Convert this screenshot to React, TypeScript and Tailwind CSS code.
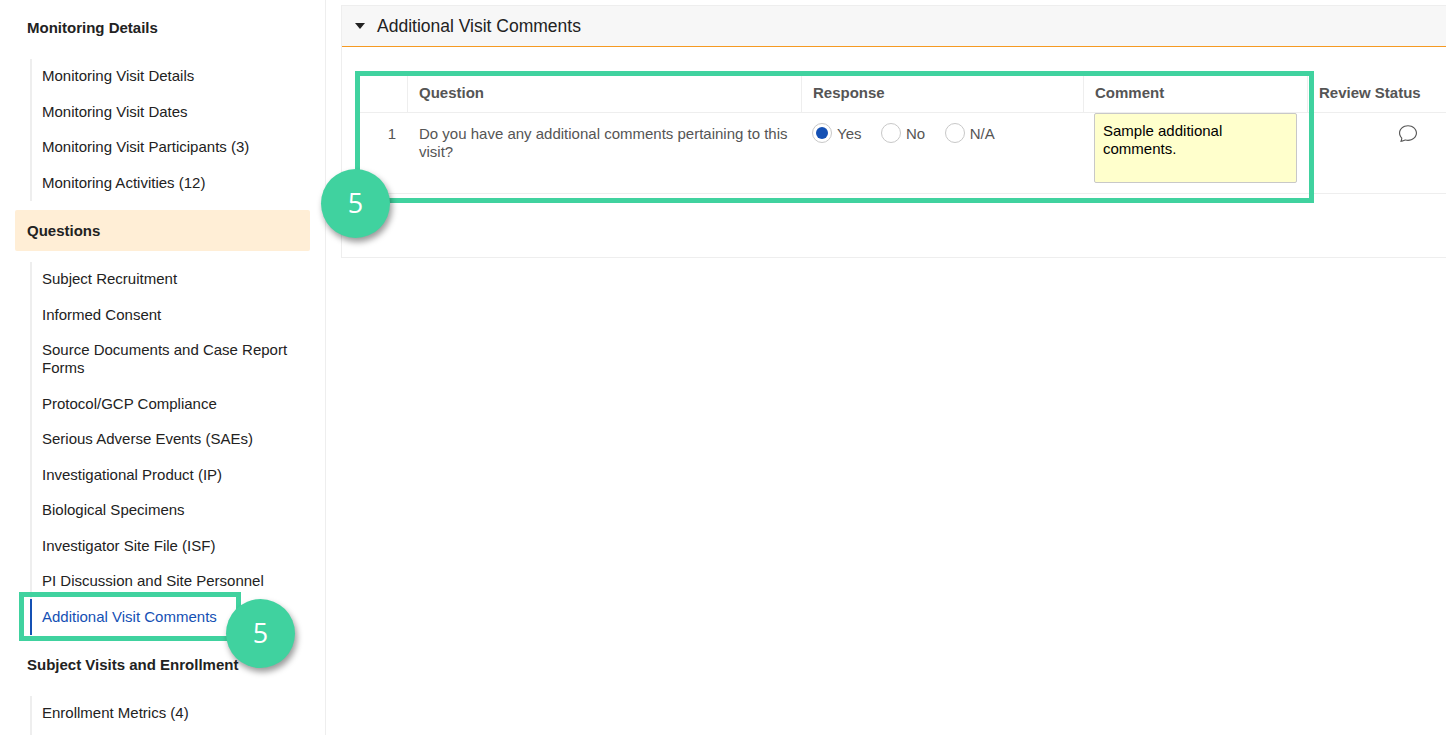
import { BsChat } from 'react-icons/bs'

const monitoringItems = [
  'Monitoring Visit Details',
  'Monitoring Visit Dates',
  'Monitoring Visit Participants (3)',
  'Monitoring Activities (12)',
]

const questionItems = [
  'Subject Recruitment',
  'Informed Consent',
  'Source Documents and Case Report Forms',
  'Protocol/GCP Compliance',
  'Serious Adverse Events (SAEs)',
  'Investigational Product (IP)',
  'Biological Specimens',
  'Investigator Site File (ISF)',
  'PI Discussion and Site Personnel',
]

function SectionHeading({ label, active }: { label: string; active?: boolean }) {
  return (
    <div
      className={`ml-[15px] flex h-[41px] w-[295px] items-center rounded-[2px] px-3 pt-[1px] text-[15px] font-bold text-[#222] ${
        active ? 'bg-[#ffeed6]' : ''
      }`}
    >
      {label}
    </div>
  )
}

function NavItem({ label, active }: { label: string; active?: boolean }) {
  return (
    <li
      className={`-ml-[2px] border-l-2 py-[8.75px] pl-[10px] pr-4 text-[15px] leading-[18px] ${
        active ? 'border-[#1450b4] text-[#1450b4]' : 'border-transparent text-[#222]'
      }`}
    >
      {label}
    </li>
  )
}

function NavList({ children, last }: { children: React.ReactNode; last?: boolean }) {
  return (
    <ul className={`mb-[9.5px] ml-[30px] mt-[10.5px] border-l-2 border-[#eeeeee] ${last ? 'pb-6' : ''}`}>
      {children}
    </ul>
  )
}

function Radio({ label, checked }: { label: string; checked?: boolean }) {
  return (
    <div className="flex items-center gap-[5px]">
      <span className="flex h-5 w-5 items-center justify-center rounded-full border border-[#c8c8c8] bg-white">
        {checked && <span className="h-3 w-3 rounded-full bg-[#1450b4]" />}
      </span>
      <span className="pt-[1px]">{label}</span>
    </div>
  )
}

function HeaderCell({ label, last }: { label?: string; last?: boolean }) {
  return (
    <div
      className={`flex items-center px-[11px] pb-[2px] text-[15px] font-bold text-[#555] ${
        last ? '' : 'border-r border-[#eeeeee]'
      }`}
    >
      {label}
    </div>
  )
}

function Badge({ className }: { className: string }) {
  return (
    <div
      className={`absolute flex h-[69px] w-[69px] items-center justify-center rounded-full bg-[#40d29f] text-[27px] text-white shadow-[2px_4px_6px_rgba(0,0,0,0.4)] [font-family:'Open_Sans',sans-serif] ${className}`}
    >
      5
    </div>
  )
}

export default function App() {
  return (
    <div className="relative flex h-[735px] w-[1446px] overflow-hidden bg-white [font-family:'Liberation_Sans',Arial,sans-serif]">
      <aside className="w-[326px] shrink-0 border-r border-[#eeeeee] pt-[7px]">
        <SectionHeading label="Monitoring Details" />
        <NavList>
          {monitoringItems.map((item) => (
            <NavItem key={item} label={item} />
          ))}
        </NavList>
        <SectionHeading label="Questions" active />
        <NavList>
          {questionItems.map((item) => (
            <NavItem key={item} label={item} />
          ))}
          <NavItem label="Additional Visit Comments" active />
        </NavList>
        <SectionHeading label="Subject Visits and Enrollment" />
        <NavList last>
          <NavItem label="Enrollment Metrics (4)" />
        </NavList>
      </aside>

      <main className="min-w-0 flex-1 pl-[15px] pt-[5px]">
        <section className="h-[253px] w-[1200px] border border-[#eeeeee]">
          <header className="flex h-[41px] items-center gap-[12px] border-b border-[#f59a23] bg-[#f7f7f7] pl-[13px] text-[17.5px] text-[#222]">
            <span className="h-0 w-0 border-x-[5.5px] border-t-[6px] border-x-transparent border-t-[#222]" />
            Additional Visit Comments
          </header>

          <div className="ml-[18px] mt-[29px]">
            <div className="grid h-[37px] grid-cols-[48px_394px_282px_224px_1fr] border-b border-[#eeeeee]">
              <HeaderCell />
              <HeaderCell label="Question" />
              <HeaderCell label="Response" />
              <HeaderCell label="Comment" />
              <HeaderCell label="Review Status" last />
            </div>
            <div className="grid h-[81px] grid-cols-[48px_394px_282px_224px_1fr] border-b border-[#eeeeee] text-[15px] leading-[18px] text-[#555]">
              <div className="pr-[12px] pt-[12px] text-right">1</div>
              <div className="px-[11px] pt-[12px]">
                Do you have any additional comments pertaining to this visit?
              </div>
              <div className="flex items-start gap-[19.5px] px-[10px] pt-[10px]">
                <Radio label="Yes" checked />
                <Radio label="No" />
                <Radio label="N/A" />
              </div>
              <div className="pl-[10px]">
                <div className="h-[70px] w-[203px] rounded-[2px] border border-[#c8c8c8] bg-[#ffffcc] px-2 py-[8px] text-black">
                  Sample additional comments.
                </div>
              </div>
              <div className="pl-[91px] pt-[11px] text-[#555]">
                <BsChat size={18} />
              </div>
            </div>
          </div>
        </section>
      </main>

      <div className="absolute left-[19px] top-[592px] h-[49px] w-[222px] border-[5px] border-[#40d29f]" />
      <Badge className="left-[226px] top-[599px]" />
      <div className="absolute left-[355px] top-[71px] h-[132px] w-[959px] border-[5px] border-[#40d29f]" />
      <Badge className="left-[321px] top-[169px]" />
    </div>
  )
}
